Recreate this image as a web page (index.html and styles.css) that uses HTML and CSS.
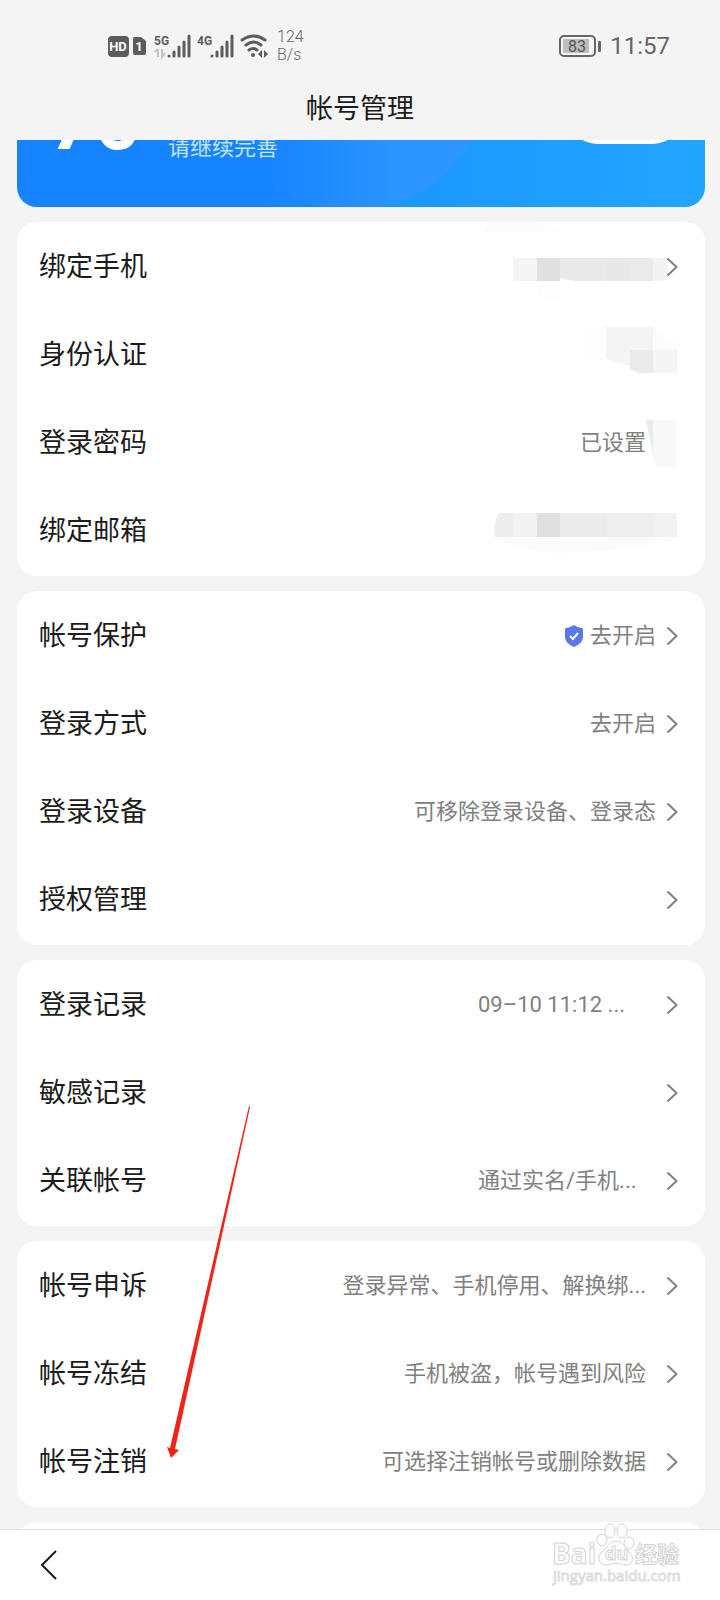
FILE: index.html
```html
<!DOCTYPE html>
<html lang="zh-CN">
<head>
  <meta charset="UTF-8" />
  <meta name="viewport" content="width=device-width, initial-scale=1.0" />
  <title>帐号管理</title>
  <link rel="stylesheet" href="styles.css">
</head>
<body>
  <svg width="0" height="0" class="defs" aria-hidden="true">
    <symbol id="chevron" viewBox="0 0 12 20">
      <path d="M1.500 1.500 L10.500 10 L1.500 18.500" fill="none" stroke="#808080" stroke-width="2" />
    </symbol>
  </svg>

  <header>
    <div class="status-bar">
      <svg class="signals" width="162" height="28" viewBox="0 0 162 28" aria-hidden="true">
        <rect x="1" y="4" width="21" height="21" rx="4" fill="#5c5c5c" />
        <text x="11" y="19" class="hd">HD</text>
        <path d="M28 5 h6 l5 4 v12 q0 2 -2 2 h-9 q-2 0 -2 -2 v-14 q0 -2 2 -2 z" fill="#5c5c5c" />
        <text x="32" y="19" class="hd">1</text>
        <text x="47" y="13" class="net">5G</text>
        <path d="M51 17 v8 M48 20 l3 -3 M55 17 v8 l3 -4" stroke="#c4c4c4" stroke-width="2" fill="none" />
        <g stroke="#5c5c5c" stroke-width="3" stroke-linecap="round">
          <path d="M62 24 v0 M67 20 v4 M72 15 v9 M77 10 v14 M82 4 v20" />
          <path d="M105 24 v0 M110 20 v4 M115 15 v9 M120 10 v14 M125 4 v20" />
        </g>
        <text x="90" y="13" class="net">4G</text>
        <g stroke="#5c5c5c" stroke-width="3" fill="none" stroke-linecap="round">
          <path d="M135 8 q12 -8 23 0" />
          <path d="M139 13 q8 -6 15 0" />
          <path d="M142 18 q4 -3 8 0" />
        </g>
        <circle cx="146" cy="23" r="2" fill="#5c5c5c" />
        <path d="M155 18 v8 l-4 -4 z M157 18 v8 l4 -4 z" fill="#5c5c5c" />
      </svg>
      <div class="speed">124<br>B/s</div>
      <svg class="battery" width="43" height="24" viewBox="0 0 43 24" aria-hidden="true">
        <rect x="1" y="2" width="35" height="20" rx="4" fill="none" stroke="#666" stroke-width="2" />
        <rect x="4" y="5" width="26" height="14" rx="1" fill="#bdbdbd" />
        <rect x="39" y="7" width="3" height="11" rx="1" fill="#666" />
        <text x="18" y="18">83</text>
      </svg>
      <time>11:57</time>
    </div>
    <h1>帐号管理</h1>
  </header>

  <main>
    <section class="banner">
      <div class="score">70</div>
      <p>请继续完善</p>
      <button type="button" aria-label="完善"></button>
    </section>

    <ul class="card">
      <li><a href="#">
        <span class="label">绑定手机</span>
        <svg class="mosaic overlap" width="184" height="88" viewBox="0 0 184 88" aria-hidden="true">
          <path d="M0 9 L6 0 L52 0 L84 9 Z" fill="#fcfcfb" />
          <rect x="29" y="35" width="24" height="23" fill="#f5f5f6" />
          <rect x="53" y="35" width="23" height="23" fill="#e0e0e2" />
          <path d="M76 35 h48 v23 h-34 l-14 -3 z" fill="#e9e9eb" />
          <rect x="123" y="35" width="23" height="23" fill="#e7e7e9" />
          <rect x="146" y="35" width="23" height="23" fill="#eaeaec" />
          <path d="M169 35 h15 v20 l-5 3 h-10 z" fill="#f3f3f3" />
          <rect x="55" y="58" width="21" height="18" fill="#fdfdfd" />
        </svg>
        <svg class="chevron"><use href="#chevron" /></svg>
      </a></li>
      <li><a href="#">
        <span class="label">身份认证</span>
        <svg class="mosaic" width="96" height="56" viewBox="0 0 96 56" aria-hidden="true">
          <rect x="0" y="0" width="24" height="34" fill="#fdfdfd" />
          <path d="M24 0 h47 v23 h-23 v16 l-24 -7 z" fill="#f4f4f4" />
          <path d="M71 0 L94 16 v7 h-23 z" fill="#fcfcfc" />
          <path d="M48 23 h23 v23 h-14 l-9 -4 z" fill="#eaeaeb" />
          <rect x="71" y="23" width="24" height="23" fill="#f4f4f4" />
        </svg>
      </a></li>
      <li><a href="#">
        <span class="label">登录密码</span>
        <span class="value">已设置</span>
        <svg class="mosaic" width="32" height="48" viewBox="0 0 32 48" aria-hidden="true">
          <path d="M0 1 h8 v40 z" fill="#ebebeb" />
          <path d="M7 1 h23 v47 h-20 l-3 -14 z" fill="#f8f8f8" />
        </svg>
      </a></li>
      <li><a href="#">
        <span class="label">绑定邮箱</span>
        <svg class="mosaic" width="184" height="48" viewBox="0 0 184 48" aria-hidden="true">
          <path d="M2 30 h180 v3 Q110 46 60 46 Q16 42 2 30 z" fill="#fbfbfb" />
          <path d="M5 6 h15 v24 h-19 q-2 -14 4 -24 z" fill="#ededed" />
          <rect x="20" y="6" width="23" height="24" fill="#f3f3f3" />
          <rect x="43" y="6" width="23" height="24" fill="#e0e0e0" />
          <rect x="66" y="6" width="47" height="24" fill="#ebebeb" />
          <rect x="113" y="6" width="47" height="24" fill="#eeeeef" />
          <rect x="160" y="6" width="23" height="24" fill="#f2f2f4" />
        </svg>
      </a></li>
    </ul>

    <ul class="card">
      <li><a href="#">
        <span class="label">帐号保护</span>
        <svg class="shield" width="20" height="22" viewBox="0 0 20 22" aria-hidden="true">
          <path d="M10 0 Q14 3 18 3 Q19 3 19 5 V12 Q19 18 10 22 Q1 18 1 12 V5 Q1 3 2 3 Q6 3 10 0 Z" fill="#5877e8" />
          <path d="M6 11 L9 14 L14 8" fill="none" stroke="#fff" stroke-width="2" />
        </svg>
        <span class="value">去开启</span>
        <svg class="chevron"><use href="#chevron" /></svg>
      </a></li>
      <li><a href="#">
        <span class="label">登录方式</span>
        <span class="value">去开启</span>
        <svg class="chevron"><use href="#chevron" /></svg>
      </a></li>
      <li><a href="#">
        <span class="label">登录设备</span>
        <span class="value">可移除登录设备、登录态</span>
        <svg class="chevron"><use href="#chevron" /></svg>
      </a></li>
      <li><a href="#">
        <span class="label">授权管理</span>
        <svg class="chevron"><use href="#chevron" /></svg>
      </a></li>
    </ul>

    <ul class="card spaced">
      <li><a href="#">
        <span class="label">登录记录</span>
        <span class="value fixed">09–10 11:12 ...</span>
        <svg class="chevron"><use href="#chevron" /></svg>
      </a></li>
      <li><a href="#">
        <span class="label">敏感记录</span>
        <svg class="chevron"><use href="#chevron" /></svg>
      </a></li>
      <li><a href="#">
        <span class="label">关联帐号</span>
        <span class="value fixed">通过实名/手机...</span>
        <svg class="chevron"><use href="#chevron" /></svg>
      </a></li>
    </ul>

    <ul class="card spaced">
      <li><a href="#">
        <span class="label">帐号申诉</span>
        <span class="value">登录异常、手机停用、解换绑...</span>
        <svg class="chevron"><use href="#chevron" /></svg>
      </a></li>
      <li><a href="#">
        <span class="label">帐号冻结</span>
        <span class="value">手机被盗，帐号遇到风险</span>
        <svg class="chevron"><use href="#chevron" /></svg>
      </a></li>
      <li class="target"><a href="#">
        <span class="label">帐号注销</span>
        <span class="value">可选择注销帐号或删除数据</span>
        <svg class="chevron"><use href="#chevron" /></svg>
      </a>
        <svg class="arrow" width="84" height="352" viewBox="0 0 84 352" aria-hidden="true">
          <path d="M82 0 L83 1 L8 343 L12 344 L4 352 L0 341 L3 342 Z" fill="#f02318" />
        </svg>
      </li>
    </ul>

    <ul class="card">
      <li></li>
    </ul>
  </main>

  <nav>
    <button type="button" class="back" aria-label="返回">
      <svg width="18" height="30" viewBox="0 0 18 30" aria-hidden="true">
        <path d="M16 1 L2 15 L16 29" fill="none" stroke="#1a1a1a" stroke-width="2" />
      </svg>
    </button>
    <svg class="watermark" width="130" height="66" viewBox="0 0 130 66" aria-hidden="true">
      <g fill="#fff" stroke="#d2d2d2" stroke-width="1">
        <ellipse cx="50" cy="20" rx="5" ry="6" />
        <ellipse cx="58" cy="11" rx="5" ry="7" />
        <ellipse cx="70" cy="11" rx="5" ry="7" />
        <ellipse cx="77" cy="23" rx="5" ry="6" />
        <path d="M64 21 C57 21 56 27 50 32 C44 37 47 45 54 45 C59 45 60 43 64 43 C68 43 69 45 74 45 C81 45 83 37 77 32 C72 27 71 21 64 21 Z" />
        <text x="0" y="44" class="wm-name">Bai</text>
        <text x="53" y="40" class="wm-du">du</text>
        <text x="83" y="42" class="wm-cn">经验</text>
      </g>
      <text x="1" y="61" class="wm-url">jingyan.baidu.com</text>
    </svg>
  </nav>
</body>
</html>
```
FILE: styles.css
```css
:root {
  --page-bg: #f4f4f5;
  --card-bg: #ffffff;
  --text-color: #1c1c1c;
  --muted-color: #808080;
  --status-color: #666666;
}

* {
  box-sizing: border-box;
  margin: 0;
  padding: 0;
}

body {
  font-family: Roboto, 'Noto Sans CJK SC', sans-serif;
  background: var(--page-bg);
  color: var(--text-color);
  height: 100vh;
  display: flex;
  flex-direction: column;
  overflow: hidden;
}

.defs {
  position: absolute;
}

svg {
  flex: none;
}

/* header */
.status-bar {
  display: flex;
  align-items: center;
  height: 78px;
  padding: 14px 50px 0 107px;
  color: var(--status-color);
}

.signals text {
  font-weight: 700;
}

.hd {
  font-size: 13px;
  fill: #fff;
  text-anchor: middle;
}

.net {
  font-size: 12px;
  fill: #5c5c5c;
}

.speed {
  margin-left: 8px;
  margin-right: auto;
  font-size: 16px;
  line-height: 18px;
  font-weight: 300;
}

.battery text {
  font-size: 16px;
  fill: #555;
  text-anchor: middle;
}

time {
  margin-left: 8px;
  font-size: 24px;
  line-height: 32px;
}

h1 {
  height: 62px;
  line-height: 62px;
  font-size: 27px;
  font-weight: 400;
  text-align: center;
}

/* list */
main {
  flex: 1;
  min-height: 0;
  overflow: hidden;
  padding: 0 15px 0 17px;
}

.banner {
  display: flex;
  align-items: flex-end;
  height: 160px;
  margin-top: -93px;
  margin-bottom: 15px;
  padding: 0 24px 47px 32px;
  border-radius: 20px;
  color: #fff;
  background:
    linear-gradient(90deg, #1684ff 36%, transparent 56%),
    radial-gradient(circle at 333px 23px, #2c95ff 140px, transparent 141px),
    linear-gradient(90deg, #1684ff, #1a96ff 50%, #22a5ff);
}

.score {
  width: 119px;
  font-size: 80px;
  line-height: 76px;
  font-weight: 700;
}

.banner p {
  font-size: 22px;
  line-height: 24px;
  color: #c4e4ff;
}

.banner button {
  width: 112px;
  height: 56px;
  margin-left: auto;
  margin-bottom: 16px;
  border: none;
  border-radius: 28px;
  background: #fff;
}

.card {
  list-style: none;
  margin-bottom: 15px;
  padding: 1px 0;
  border-radius: 20px;
  background: var(--card-bg);
}

.card li {
  height: 88px;
}

.card a {
  display: flex;
  align-items: center;
  height: 88px;
  padding: 0 27px 0 22px;
  color: inherit;
  text-decoration: none;
}

.label {
  margin-right: auto;
  font-size: 27px;
  line-height: 40px;
}

.value {
  font-size: 22px;
  line-height: 32px;
  color: var(--muted-color);
  white-space: nowrap;
}

.fixed {
  width: 168px;
}

.chevron {
  width: 12px;
  height: 20px;
  margin-left: 10px;
}

.spaced .chevron {
  margin-left: 20px;
}

.overlap + .chevron {
  margin-left: -2px;
}

.shield {
  margin-right: 6px;
}

/* hand-drawn pointer over the list */
.target {
  position: relative;
}

.arrow {
  position: absolute;
  left: 150px;
  bottom: 48px;
}

/* bottom bar */
nav {
  position: relative;
  display: flex;
  align-items: center;
  height: 71px;
  padding-left: 40px;
  border-top: 1px solid #dedede;
  background: #fff;
}

.back {
  display: flex;
  border: none;
  background: none;
  cursor: pointer;
}

.watermark {
  position: absolute;
  right: 38px;
  bottom: 14px;
}

.wm-name {
  font-family: 'Open Sans', sans-serif;
  font-size: 28px;
  font-weight: 700;
}

.wm-du {
  font-family: 'Open Sans', sans-serif;
  font-size: 18px;
  font-weight: 700;
}

.wm-cn {
  font-size: 22px;
  font-weight: 700;
}

.wm-url {
  font-family: 'Open Sans', sans-serif;
  font-size: 15px;
  fill: #fff;
  stroke: #dcdcdc;
}
```
